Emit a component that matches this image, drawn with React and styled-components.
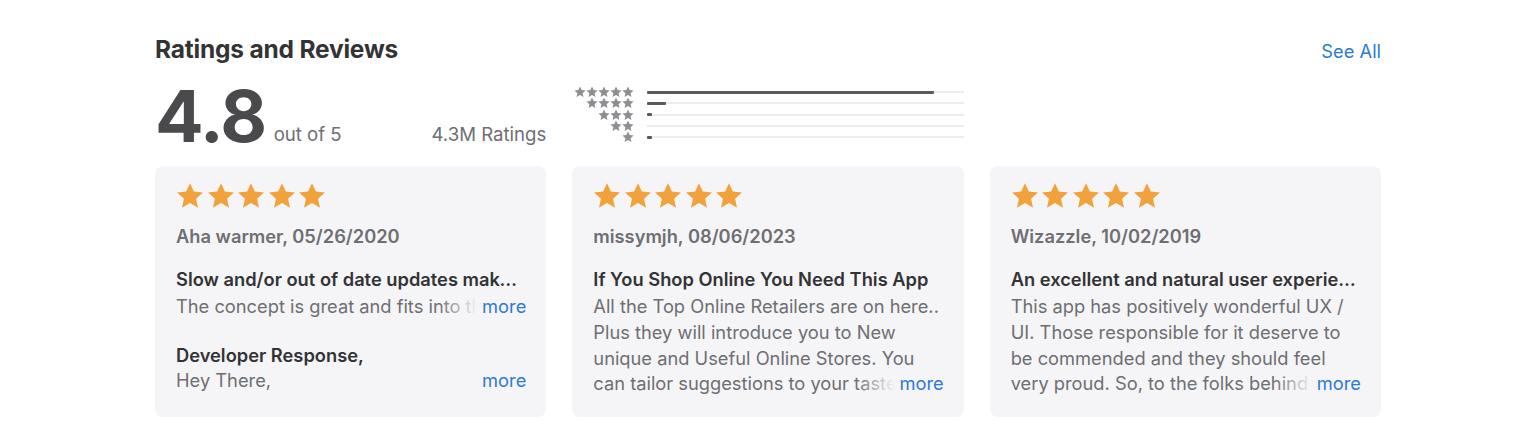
import React from 'react'
import styled, { createGlobalStyle } from 'styled-components'

const GlobalStyle = createGlobalStyle`
    body {
        margin: 0;
        background: #fff;
        font-family: Inter, "Liberation Sans", sans-serif;
        -webkit-font-smoothing: antialiased;
    }
`

const Page = styled.div`
    width: 1226px;
    padding: 34px 0 0 155px;
`

const Header = styled.div`
    display: flex;
    justify-content: space-between;
    align-items: baseline;
`

const Title = styled.h2`
    margin: 0;
    font-size: 24.5px;
    font-weight: 700;
    color: #333336;
    letter-spacing: -0.2px;
`

const Link = styled.a`
    color: #2d7ad6;
    font-size: 18.3px;
    text-decoration: none;
    cursor: pointer;
`

const Grid = styled.div`
    display: grid;
    grid-template-columns: repeat(3, minmax(0, 1fr));
    column-gap: 26px;
    align-items: start;
`

const Summary = styled.div`
    display: flex;
    align-items: baseline;
    justify-content: space-between;
    margin-top: 16px;
`

const Score = styled.div`
    display: flex;
    align-items: baseline;
    gap: 8px;
`

const Big = styled.span`
    font-size: 72px;
    font-weight: 700;
    color: #4a4a4d;
    letter-spacing: -1.5px;
    line-height: 72px;
`

const Small = styled.span`
    font-size: 18.6px;
    color: #6e6e73;
    position: relative;
    top: -1px;
`

const Histogram = styled.div`
    margin-top: 22px;
    display: flex;
    flex-direction: column;
`

const HistRow = styled.div`
    display: grid;
    grid-template-columns: 62px 1fr;
    column-gap: 13px;
    align-items: center;
    height: 11.3px;
`

const MiniStars = styled.div`
    display: flex;
    justify-content: flex-end;
    color: #8e8e93;
`

const Track = styled.div`
    height: 2px;
    background: #ececee;
    position: relative;
`

const Fill = styled.div`
    position: absolute;
    left: 0;
    top: -0.5px;
    height: 3px;
    border-radius: 1px;
    background: #5a5a5e;
`

const Cards = styled(Grid)`
    margin-top: 14px;
`

const Card = styled.div`
    background: #f5f5f7;
    border-radius: 8px;
    height: 251px;
    box-sizing: border-box;
    padding: 16px 20px 0 21px;
`

const Stars = styled.div`
    display: flex;
    gap: 2.5px;
    color: #f1a23c;
`

const Author = styled.div`
    margin-top: 14px;
    font-size: 18.3px;
    font-weight: 600;
    color: #6e6e73;
    line-height: 24px;
`

const ReviewTitle = styled.div`
    margin-top: 19px;
    font-size: 18.3px;
    font-weight: 600;
    color: #333336;
    line-height: 24px;
    white-space: nowrap;
    overflow: hidden;
    text-overflow: ellipsis;
`

const Body = styled.div`
    position: relative;
    margin-top: ${p => p.gap || 0}px;
    font-size: 18.3px;
    color: #6e6e73;
    line-height: 25.8px;
    overflow: hidden;
    max-height: ${p => p.lines * 25.8}px;
`

const More = styled.a`
    position: absolute;
    right: 0;
    bottom: 0;
    padding-left: 44px;
    color: #2d7ad6;
    background: linear-gradient(to right, rgba(245, 245, 247, 0), #f5f5f7 40px);
    cursor: pointer;
`

const Response = styled.div`
    margin-top: 23px;
`

const ResponseTitle = styled.div`
    font-size: 18.3px;
    font-weight: 600;
    color: #333336;
    line-height: 24px;
`

const Star = ({ size }) => (
    <svg width={size} height={size} viewBox="0 0 24 24">
        <path
            fill="currentColor"
            d="M12 1l3.3 7.2 7.8.8-5.9 5.3 1.7 7.7L12 18 5.1 22l1.7-7.7L.9 9l7.8-.8z"
        />
    </svg>
)

const histogram = [
    { stars: 5, pct: 90.5 },
    { stars: 4, pct: 5.8 },
    { stars: 3, pct: 1.6 },
    { stars: 2, pct: 0 },
    { stars: 1, pct: 1.6 },
]

const reviews = [
    {
        author: 'Aha warmer, 05/26/2020',
        title: 'Slow and/or out of date updates make the app frustrating',
        body: 'The concept is great and fits into the way I like to shop, but the updates are slow and often out of date.',
        lines: 1,
        response: 'Hey There,',
    },
    {
        author: 'missymjh, 08/06/2023',
        title: 'If You Shop Online You Need This App',
        body: 'All the Top Online Retailers are on here.. Plus they will introduce you to New unique and Useful Online Stores. You can tailor suggestions to your taste and get notified of sales.',
        lines: 4,
    },
    {
        author: 'Wizazzle, 10/02/2019',
        title: 'An excellent and natural user experience',
        body: 'This app has positively wonderful UX / UI. Those responsible for it deserve to be commended and they should feel very proud. So, to the folks behind this app, thank you.',
        lines: 4,
    },
]

const App = () => {
    return (
        <>
            <GlobalStyle />
            <Page>
                <Header>
                    <Title>Ratings and Reviews</Title>
                    <Link>See All</Link>
                </Header>
                <Grid>
                    <Summary>
                        <Score>
                            <Big>4.8</Big>
                            <Small>out of 5</Small>
                        </Score>
                        <Small>4.3M Ratings</Small>
                    </Summary>
                    <Histogram>
                        {histogram.map(row => (
                            <HistRow key={row.stars}>
                                <MiniStars>
                                    {Array.from({ length: row.stars }).map((_, i) => (
                                        <Star key={i} size={12} />
                                    ))}
                                </MiniStars>
                                <Track>
                                    <Fill style={{ width: `${row.pct}%` }} />
                                </Track>
                            </HistRow>
                        ))}
                    </Histogram>
                </Grid>
                <Cards>
                    {reviews.map(r => (
                        <Card key={r.author}>
                            <Stars>
                                {Array.from({ length: 5 }).map((_, i) => (
                                    <Star key={i} size={28} />
                                ))}
                            </Stars>
                            <Author>{r.author}</Author>
                            <ReviewTitle>{r.title}</ReviewTitle>
                            <Body lines={r.lines} gap={3}>
                                {r.body}
                                <More>more</More>
                            </Body>
                            {r.response && (
                                <Response>
                                    <ResponseTitle>Developer Response,</ResponseTitle>
                                    <Body lines={1} gap={1}>
                                        {r.response}
                                        <More>more</More>
                                    </Body>
                                </Response>
                            )}
                        </Card>
                    ))}
                </Cards>
            </Page>
        </>
    )
}

export default App
